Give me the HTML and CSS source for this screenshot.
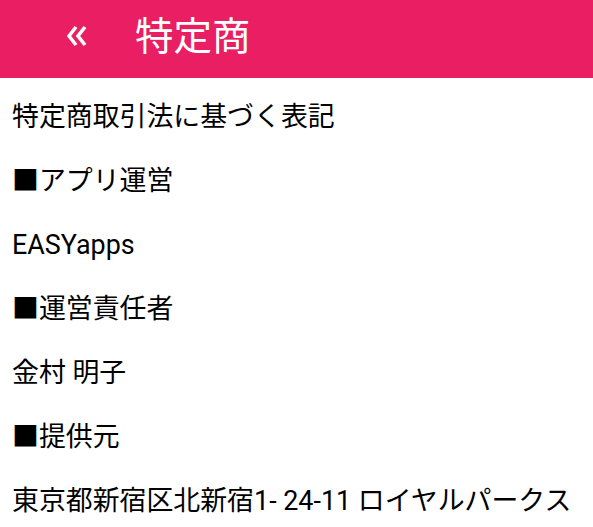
FILE: index.html
```html
<!DOCTYPE html>
<html lang="ja">
<head>
  <meta charset="UTF-8">
  <title>特定商</title>
  <link rel="stylesheet" href="styles.css">
</head>
<body>

  <div class="toolbar">
    <svg class="back" width="20" height="22" viewBox="0 0 20 22">
      <polyline points="9,2 2,11 9,20" />
      <polyline points="18,2 11,11 18,20" />
    </svg>
    <span class="title">特定商</span>
  </div>

  <div class="content">
    <p>特定商取引法に基づく表記</p>
    <p>■アプリ運営</p>
    <p>EASYapps</p>
    <p>■運営責任者</p>
    <p>金村 明子</p>
    <p>■提供元</p>
    <p>東京都新宿区北新宿1- 24-11 ロイヤルパークス</p>
  </div>

</body>
</html>
```

FILE: styles.css
```css
body {
  margin: 0;
  font-family: Roboto, "Noto Sans CJK JP", sans-serif;
  background: #fff;
  color: #000;
}
.toolbar {
  display: flex;
  align-items: center;
  height: 78px;
  background-color: #e91e63;
  color: #fff;
}
.back {
  margin-left: 67px;
  margin-bottom: 6px;
  fill: none;
  stroke: #fff;
  stroke-width: 3.6;
}
.title {
  margin-left: 48px;
  margin-bottom: 12px;
  font-size: 38.5px;
}
.content {
  padding: 7px 12px 0;
}
.content p {
  margin: 0;
  font-size: 26.9px;
  line-height: 64px;
  white-space: nowrap;
}
```
